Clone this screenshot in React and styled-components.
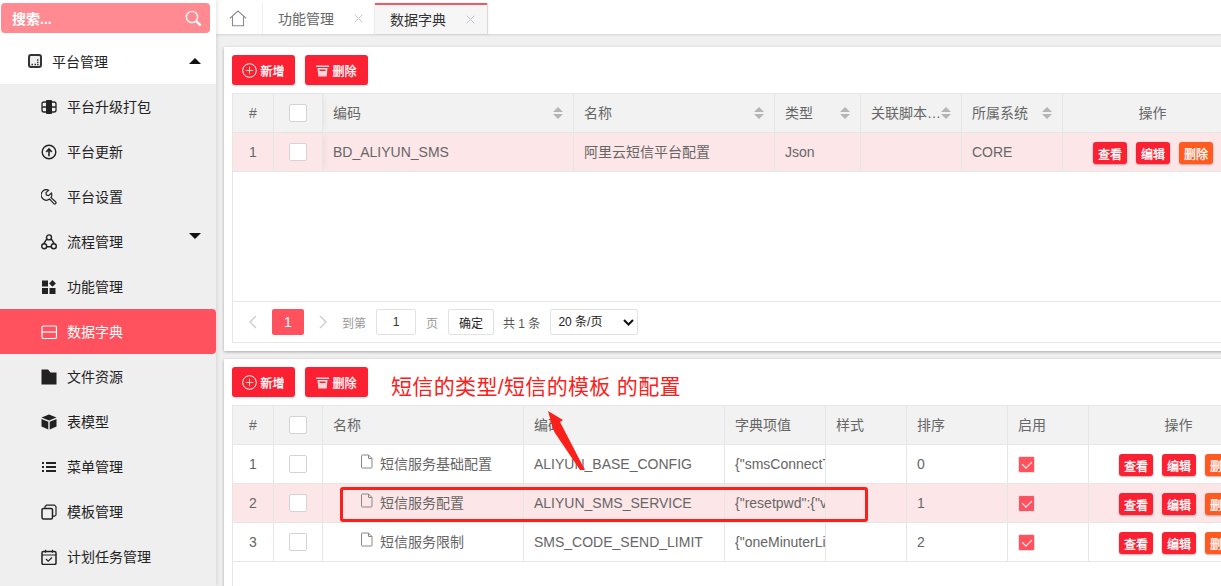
import React from "react";
import styled, { createGlobalStyle } from "styled-components";

const font = `"Liberation Sans", "Noto Sans CJK SC", sans-serif`;

const Global = createGlobalStyle`
  html, body { margin: 0; padding: 0; height: 100%; overflow: hidden; background: #f0f0f0; }
  * { box-sizing: border-box; }
  body { font-family: ${font}; font-size: 14px; color: #666; }
`;

const Icon = ({ children, fill, sw = 1.2 }) => (
  <svg width="16" height="16" viewBox="0 0 16 16" fill={fill ? "currentColor" : "none"} stroke={fill ? "none" : "currentColor"} strokeWidth={sw}>
    {children}
  </svg>
);

const menuItems = [
  { label: "平台升级打包", icon: <Icon sw={1.3}><path d="M5 3H3a2 2 0 0 0-2 2v6a2 2 0 0 0 2 2h2M11 3h2a2 2 0 0 1 2 2v6a2 2 0 0 1-2 2h-2M1 8h4M11 8h4" /><rect x="5" y="1" width="6" height="14" rx=".8" fill="currentColor" stroke="none" /></Icon> },
  { label: "平台更新", icon: <Icon sw={1.4}><circle cx="8" cy="8" r="6.8" /><path d="M8 12.200V5.200M5.200 8 8 5l2.800 3" strokeWidth="1.600" /></Icon> },
  { label: "平台设置", icon: <Icon sw={1.2}><path d="M7.600 1.200 5 3.600 5.400 6 7.600 6.600 10.400 4A5 5 0 0 1 10 8.600L14.800 13A1.300 1.300 0 0 1 13 14.800L8.600 10A5.200 5.200 0 1 1 7.600 1.200Z" /></Icon> },
  { label: "流程管理", caret: "down", icon: <Icon sw={1.4}><circle cx="8" cy="3.400" r="2.500" /><circle cx="3.200" cy="12.200" r="2.500" /><circle cx="12.800" cy="12.200" r="2.500" /><path d="M5.700 12.800h4.600M2.800 9.700 5.800 4.800M13.200 9.700 10.200 4.800" /></Icon> },
  { label: "功能管理", icon: <Icon fill><rect x="1" y="1.500" width="6" height="6" /><rect x="1" y="9" width="6" height="6" /><rect x="8.500" y="9" width="6" height="6" /><path d="m11.500 1 3.400 3.400-3.400 3.400-3.400-3.400z" /></Icon> },
  { label: "数据字典", active: true, icon: <Icon><rect x="1" y="2" width="14.500" height="12.500" rx="1.500" /><path d="M1 8h14.500" /></Icon> },
  { label: "文件资源", icon: <Icon fill><path d="M.5 .5h6.500l2.500 3h6v12H.5z" /></Icon> },
  { label: "表模型", icon: <Icon fill><path d="M8 .5 15.500 3.500 8 6.600.5 3.500zM.5 5l6.800 2.800v7.700L.5 12.600zM15.500 5 8.700 7.800v7.700l6.800-2.900z" /></Icon> },
  { label: "菜单管理", icon: <Icon fill><path d="M1 3h2v2H1zM5 3h10v2H5zM1 7h2v2H1zM5 7h10v2H5zM1 11h2v2H1zM5 11h10v2H5z" /></Icon> },
  { label: "模板管理", icon: <Icon><rect x="1" y="4.500" width="10.500" height="10.500" rx="1.500" strokeWidth="1.500" /><path d="M4 4.500V2.500L5.500 1.200h8L15 2.700v8.300l-1.500 1.200h-2" /></Icon> },
  { label: "计划任务管理", icon: <Icon><rect x="1" y="2.500" width="14" height="13" rx="1.500" strokeWidth="1.500" /><path d="M1 6h14M4.500 .8v3M11.500 .8v3M5 10l2.200 2.200L11 8.500" /></Icon> },
];

const App = () => (
  <Page>
    <Global />
    <Sidebar>
      <Search>
        <span>搜索...</span>
        <svg width="17" height="17" viewBox="0 0 17 17" fill="none" stroke="#fff" strokeWidth="1.400">
          <circle cx="7" cy="7" r="5.600" />
          <path d="M11.400 11.400 15.600 15.400" strokeWidth="2.400" />
        </svg>
      </Search>
      <TopItem>
        <svg width="14" height="14" viewBox="0 0 14 14" fill="#eee" stroke="#333" strokeWidth="2">
          <rect x="1" y="1" width="12" height="12" rx="2" />
          <path d="M3.500 10.500h1.500M6.500 10.500h1.500M9 10.500h1.500M9 8.300h1.500M9 6h1.500" strokeWidth="1.300" />
        </svg>
        <span>平台管理</span>
        <Caret $up />
      </TopItem>
      <Menu>
        {menuItems.map((m) => (
          <MenuItem key={m.label} $active={m.active}>
            <MenuIcon>{m.icon}</MenuIcon>
            <span>{m.label}</span>
            {m.caret && <Caret />}
          </MenuItem>
        ))}
      </Menu>
    </Sidebar>

    <Main>
      <Tabs>
        <HomeTab>
          <svg width="18" height="17" viewBox="0 0 18 17" fill="none" stroke="#8a8a8a" strokeWidth="1.100">
            <path d="M.8 8.400 9 1l8.200 7.400M3.500 6.600V15.800h11V6.600" />
          </svg>
        </HomeTab>
        <Tab><span>功能管理</span><Close /></Tab>
        <Tab $active><span>数据字典</span><Close /></Tab>
      </Tabs>

      <Content>
        <Panel $h={304}>
          <Toolbar />
          <TableBox $h={250}>
            <Table $cols="41px 49px 251px 201px 86px 101px 101px 200px">
              <Row $head>
                <Cell $center>#</Cell>
                <Cell $center $shade><Check /></Cell>
                <Cell $cjk>编码<Sort /></Cell>
                <Cell $cjk>名称<Sort /></Cell>
                <Cell $cjk>类型<Sort /></Cell>
                <Cell $cjk>关联脚本…<Sort /></Cell>
                <Cell $cjk>所属系统<Sort /></Cell>
                <Cell $center $cjk $pad={20}>操作</Cell>
              </Row>
              <Row $pink>
                <Cell $center>1</Cell>
                <Cell $center $shade><Check /></Cell>
                <Cell>BD_ALIYUN_SMS</Cell>
                <Cell $cjk>阿里云短信平台配置</Cell>
                <Cell>Json</Cell>
                <Cell />
                <Cell>CORE</Cell>
                <Actions />
              </Row>
            </Table>
            <Pager>
              <PagerArrow width="8" height="14" viewBox="0 0 8 14"><path d="M7 1 1 7l6 6" /></PagerArrow>
              <PageNum>1</PageNum>
              <PagerArrow width="8" height="14" viewBox="0 0 8 14"><path d="m1 1 6 6-6 6" /></PagerArrow>
              <PagerLabel $first>到第</PagerLabel>
              <PageInput>1</PageInput>
              <PagerLabel>页</PagerLabel>
              <Confirm>确定</Confirm>
              <Total>共 1 条</Total>
              <SelectWrap>
                <SizeSelect defaultValue="20">
                  <option value="20">20 条/页</option>
                </SizeSelect>
                <svg width="11" height="7" viewBox="0 0 11 7" fill="none" stroke="#111" strokeWidth="2">
                  <path d="m1 1 4.500 4.500L10 1" />
                </svg>
              </SelectWrap>
            </Pager>
          </TableBox>
        </Panel>

        <Panel $h={240}>
          <Toolbar />
          <TableBox $h={190}>
            <Table $cols="41px 49px 201px 201px 101px 81px 101px 81px 200px">
              <Row $head>
                <Cell $center>#</Cell>
                <Cell $center><Check /></Cell>
                <Cell $cjk>名称</Cell>
                <Cell $cjk>编码</Cell>
                <Cell $cjk>字典项值</Cell>
                <Cell $cjk>样式</Cell>
                <Cell $cjk>排序</Cell>
                <Cell $cjk>启用</Cell>
                <Cell $center $cjk $pad={20}>操作</Cell>
              </Row>
              {[
                ["1", "短信服务基础配置", "ALIYUN_BASE_CONFIG", '{"smsConnectTimeout"', "0"],
                ["2", "短信服务配置", "ALIYUN_SMS_SERVICE", '{"resetpwd":{"value"', "1"],
                ["3", "短信服务限制", "SMS_CODE_SEND_LIMIT", '{"oneMinuterLimit"', "2"],
              ].map((r, i) => (
                <Row key={r[0]} $pink={i === 1}>
                  <Cell $center>{r[0]}</Cell>
                  <Cell $center><Check /></Cell>
                  <TreeCell $cjk>
                    <svg width="14" height="15" viewBox="0 0 14 15" fill="none" stroke="#888" strokeWidth="1">
                      <path d="M1.500 2a1 1 0 0 1 1-1h6l3.500 3.500V13a1 1 0 0 1-1 1h-8.500a1 1 0 0 1-1-1zM8.500 1v3.500H12" />
                    </svg>
                    {r[1]}
                  </TreeCell>
                  <Cell>{r[2]}</Cell>
                  <Cell>{r[3]}</Cell>
                  <Cell />
                  <Cell>{r[4]}</Cell>
                  <Cell><Checked /></Cell>
                  <Actions />
                </Row>
              ))}
            </Table>
          </TableBox>
        </Panel>
      </Content>

      <Note>短信的类型/短信的模板 的配置</Note>
      <Arrow width="40" height="62" viewBox="0 0 40 62">
        <path d="M0 0 15 9 12 11 37 59 32 59 7 22 5 18z" fill="#fb2019" />
      </Arrow>
      <Highlight />
    </Main>
  </Page>
);

const Toolbar = () => (
  <ToolRow>
    <ToolButton>
      <svg width="15" height="15" viewBox="0 0 15 15" fill="none" stroke="#fff" strokeWidth="1">
        <circle cx="7.500" cy="7.500" r="6.800" />
        <path d="M3.800 7.500h7.400M7.500 3.800v7.400" stroke="#ffd1a8" />
      </svg>
      新增
    </ToolButton>
    <ToolButton>
      <svg width="13" height="13" viewBox="0 0 13 13" fill="#ffd6d6">
        <path d="M0 1.500h13v1.500H0zM1.500 4h10l-.8 8.500H2.300z" />
        <path d="M3.500 5.500h6v1.500h-6z" fill="#fb2032" />
      </svg>
      删除
    </ToolButton>
  </ToolRow>
);

const Actions = () => (
  <ActionCell>
    <SmallButton>查看</SmallButton>
    <SmallButton>编辑</SmallButton>
    <SmallButton $orange>删除</SmallButton>
  </ActionCell>
);

export default App;

const Page = styled.div`
  display: flex;
  width: 1221px;
  height: 586px;
  overflow: hidden;
`;

const Sidebar = styled.aside`
  width: 216px;
  flex: none;
  background: #fff;
  display: flex;
  flex-direction: column;
  padding-top: 3px;
  position: relative;
  z-index: 2;
  box-shadow: 1px 0 4px rgba(0, 0, 0, 0.12);
`;

const Search = styled.div`
  width: 209px;
  height: 30px;
  margin-left: 1px;
  background: #ff8a92;
  border-radius: 4px;
  color: #fff;
  font-size: 14px;
  font-weight: 700;
  display: flex;
  align-items: center;
  justify-content: space-between;
  padding: 0 8px 0 11px;
  flex: none;
`;

const TopItem = styled.div`
  height: 51px;
  display: flex;
  align-items: center;
  padding: 4px 0 0 28px;
  color: #222;
  font-size: 14px;
  flex: none;
  position: relative;
  span { margin-left: 10px; }
`;

const Menu = styled.div`
  flex: 1;
  background: #efefef;
`;

const MenuItem = styled.div`
  height: 45px;
  display: flex;
  align-items: center;
  padding-left: 41px;
  font-size: 14px;
  color: ${(p) => (p.$active ? "#fff" : "#222")};
  background: ${(p) => (p.$active ? "#ff525e" : "transparent")};
  border-radius: ${(p) => (p.$active ? "0 4px 4px 0" : "0")};
  position: relative;
  span:not(:first-child) { margin-bottom: 2px; }
`;

const MenuIcon = styled.span`
  width: 16px;
  height: 16px;
  margin-right: 10px;
  display: flex;
  color: inherit;
`;

const Caret = styled.i`
  position: absolute;
  right: 15px;
  top: ${(p) => (p.$up ? "25px" : "14px")};
  width: 0;
  height: 0;
  border-left: 6px solid transparent;
  border-right: 6px solid transparent;
  ${(p) => (p.$up ? "border-bottom: 6px solid #111;" : "border-top: 6px solid #111;")}
`;

const Main = styled.main`
  flex: 1;
  min-width: 0;
  display: flex;
  flex-direction: column;
  position: relative;
  overflow: hidden;
`;

const Tabs = styled.div`
  height: 34px;
  background: #fff;
  display: flex;
  flex: none;
  box-shadow: 0 1px 2px rgba(0, 0, 0, 0.12);
`;

const HomeTab = styled.div`
  width: 47px;
  margin-top: 3px;
  display: flex;
  align-items: center;
  justify-content: center;
  border-right: 1px solid #f0f0f0;
  padding-right: 2px;
`;

const Tab = styled.div`
  width: 112px;
  margin-top: 3px;
  display: flex;
  align-items: center;
  padding-left: 15px;
  font-size: 14px;
  color: ${(p) => (p.$active ? "#333" : "#666")};
  background: ${(p) => (p.$active ? "#f6f6f6" : "#fff")};
  ${(p) => p.$active && "border-top: 2px solid #f05a68; box-shadow: 1px 0 1px rgba(0,0,0,.15), -1px 0 1px rgba(0,0,0,.08);"}
  span { margin-bottom: 2px; }
`;

const Close = () => (
  <CloseMark width="9" height="9" viewBox="0 0 9 9">
    <path d="m.7.7 7.600 7.600M8.300.7.7 8.300" />
  </CloseMark>
);

const CloseMark = styled.svg`
  margin-left: 20px;
  fill: none;
  stroke: #c4c4c4;
  stroke-width: 1;
`;

const Content = styled.div`
  flex: 1;
  padding: 13px 0 0 8px;
  display: flex;
  flex-direction: column;
  gap: 8px;
  min-height: 0;
`;

const Panel = styled.section`
  width: 1100px;
  height: ${(p) => p.$h}px;
  flex: none;
  background: #fff;
  padding: 8px;
  box-shadow: 0 1px 3px rgba(0, 0, 0, 0.3);
`;

const ToolRow = styled.div`
  display: flex;
  gap: 10px;
  height: 30px;
  margin-bottom: 8px;
`;

const ToolButton = styled.button`
  width: 63px;
  height: 30px;
  border: 0;
  padding: 0;
  border-radius: 3px;
  background: #fb2032;
  color: #fff;
  font: 400 12px ${font};
  -webkit-text-stroke: 0.3px #fff;
  display: flex;
  align-items: center;
  justify-content: center;
  gap: 3px;
  box-shadow: 0 1px 2px rgba(0, 0, 0, 0.15);
`;

const TableBox = styled.div`
  height: ${(p) => p.$h}px;
  border: 1px solid #e6e6e6;
  border-bottom-width: ${(p) => (p.$h > 200 ? "1px" : "0")};
  border-right: 0;
  display: flex;
  flex-direction: column;
  justify-content: space-between;
`;

const Table = styled.div`
  display: grid;
  grid-template-columns: ${(p) => p.$cols};
`;

const Row = styled.div`
  display: grid;
  grid-column: 1 / -1;
  grid-template-columns: subgrid;
  height: 39px;
  background: ${(p) => (p.$head ? "#f2f2f2" : p.$pink ? "#fde6e8" : "#fff")};
  border-bottom: 1px solid #e6e6e6;
`;

const Cell = styled.div`
  display: flex;
  align-items: center;
  justify-content: ${(p) => (p.$center ? "center" : "flex-start")};
  padding: ${(p) => (p.$center ? "0" : "0 10px")};
  ${(p) => p.$pad && `padding-right: ${p.$pad}px;`}
  ${(p) => p.$cjk && "padding-bottom: 2px;"}
  ${(p) => p.$shade && "box-shadow: 4px 0 6px -3px rgba(0, 0, 0, 0.07);"}
  border-right: 1px solid #e6e6e6;
  white-space: nowrap;
  overflow: hidden;
  position: relative;
  font-size: 14px;
  color: #666;
`;

const TreeCell = styled(Cell)`
  padding-left: 37px;
  gap: 6px;
  svg { margin-top: -3px; }
`;

const ActionCell = styled.div`
  display: flex;
  align-items: center;
  gap: 9px;
  padding-left: 30px;
  padding-top: 2px;
`;

const SmallButton = styled.button`
  width: 34px;
  height: 22px;
  border: 0;
  padding: 0;
  border-radius: 3px;
  background: ${(p) => (p.$orange ? "#ff5a1f" : "#fb2032")};
  color: #fff;
  font: 400 12px ${font};
  -webkit-text-stroke: 0.3px #fff;
  box-shadow: 0 1px 2px rgba(0, 0, 0, 0.3);
  flex: none;
`;

const Check = styled.i`
  display: block;
  width: 18px;
  height: 18px;
  background: #fff;
  border: 1px solid #d4d4d4;
  border-radius: 2px;
`;

const Checked = styled.i`
  display: block;
  position: relative;
  width: 17px;
  height: 17px;
  background: #ff525e;
  border: 1px solid #e0e0e0;
  border-radius: 2px;
  &::after {
    content: "";
    position: absolute;
    left: 5px;
    top: 2px;
    width: 5px;
    height: 8px;
    border: solid #fff;
    border-width: 0 1px 1px 0;
    transform: rotate(45deg);
  }
`;

const Sort = styled.i`
  position: absolute;
  right: 10px;
  top: 13px;
  width: 10px;
  height: 12px;
  &::before, &::after {
    content: "";
    position: absolute;
    left: 0;
    border-left: 5px solid transparent;
    border-right: 5px solid transparent;
  }
  &::before { top: 0; border-bottom: 5px solid #b5b5b5; }
  &::after { bottom: 0; border-top: 5px solid #b5b5b5; }
`;

const Pager = styled.div`
  height: 41px;
  border-top: 1px solid #e6e6e6;
  display: flex;
  align-items: center;
  padding-left: 16px;
  font-size: 12px;
  color: #999;
`;

const PagerArrow = styled.svg`
  flex: none;
  fill: none;
  stroke: #ccc;
  stroke-width: 1.400;
`;

const PageNum = styled.span`
  width: 32px;
  height: 26px;
  margin: 0 15px;
  background: #ff525e;
  color: #fff;
  border-radius: 2px;
  font-size: 14px;
  display: flex;
  align-items: center;
  justify-content: center;
`;

const PagerLabel = styled.span`
  margin: 0 10px 0 ${(p) => (p.$first ? "15px" : "10px")};
`;

const PageInput = styled.span`
  width: 40px;
  height: 26px;
  border: 1px solid #e2e2e2;
  border-radius: 2px;
  display: flex;
  align-items: center;
  justify-content: center;
  color: #333;
`;

const Confirm = styled.span`
  width: 46px;
  height: 26px;
  border: 1px solid #e2e2e2;
  border-radius: 2px;
  display: flex;
  align-items: center;
  justify-content: center;
  color: #222;
`;

const Total = styled.span`
  margin: 0 10px 0 9px;
  color: #555;
`;

const SelectWrap = styled.div`
  position: relative;
  width: 88px;
  height: 26px;
  svg { position: absolute; right: 4px; top: 10px; pointer-events: none; }
`;

const SizeSelect = styled.select`
  appearance: none;
  width: 100%;
  height: 100%;
  border: 1px solid #e2e2e2;
  border-radius: 2px;
  background: #fff;
  color: #222;
  font: 12px ${font};
  padding-left: 7px;
`;

/* 截图上手工加的红色标注 */
const Note = styled.div`
  position: absolute;
  left: 175px;
  top: 375px;
  font-size: 21px;
  line-height: 24px;
  letter-spacing: 0.35px;
  color: #fb2019;
  white-space: nowrap;
`;

const Arrow = styled.svg`
  position: absolute;
  left: 332px;
  top: 411px;
`;

const Highlight = styled.div`
  position: absolute;
  left: 124px;
  top: 487px;
  width: 528px;
  height: 35px;
  border: 3px solid #fb2019;
  border-radius: 3px;
`;
